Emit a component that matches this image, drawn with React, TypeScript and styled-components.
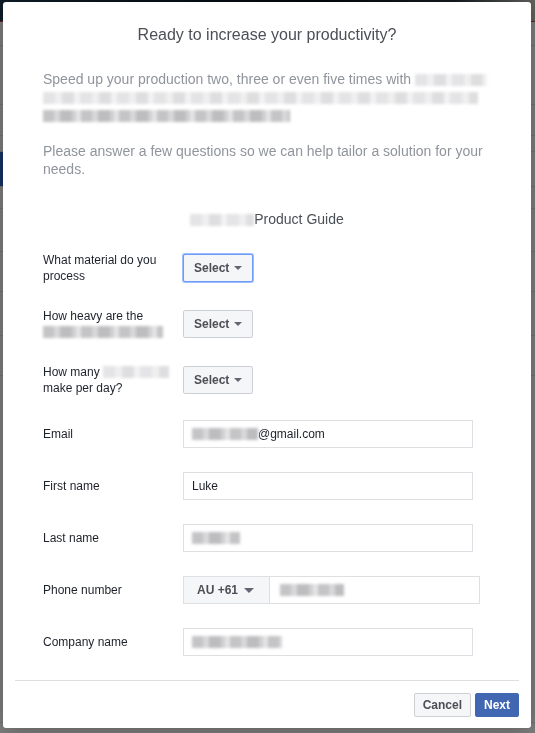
import React from 'react';
import styled, {createGlobalStyle, css} from 'styled-components';

const textDark = '#1d2129';
const textMid = '#4b4f56';
const textLight = '#90949c';
const fbBlue = '#4267b2';
const lineGray = '#dddfe2';

const GlobalStyle = createGlobalStyle`
  html, body {
    margin: 0;
    padding: 0;
    overflow: hidden;
    background: #ffffff;
  }
  body {
    font-family: "Liberation Sans", Arial, Helvetica, sans-serif;
    -webkit-font-smoothing: antialiased;
  }
`;

// ---- page behind the dialog ----

const Page = styled.div`
  width: 535px;
  height: 733px;
  display: flex;
  flex-direction: column;
  background: #ffffff;
  overflow: hidden;
`;

const Cover = styled.div`
  height: 21px;
  flex-shrink: 0;
  background: linear-gradient(90deg, #1d3b52 0%, #0f2436 30%, #08121b 60%, #2a3a44 85%, #c8c8c0 100%);
  border-bottom: 1px solid #e0393e;
`;

const Stripe = styled.div<{$h: number; $tab?: boolean}>`
  height: ${p => p.$h}px;
  flex-shrink: 0;
  border-bottom: 1px solid #e3e5e8;
  box-sizing: border-box;
  ${p => p.$tab && css`
    background: linear-gradient(90deg, #2f63c9 0 6px, transparent 6px);
  `}
`;

const PageFooter = styled.div`
  display: flex;
  padding: 8px 0 0 27px;
  font-size: 16px;
  line-height: 18px;
  color: ${textDark};
`;

const FooterCell = styled.span<{$w: number}>`
  width: ${p => p.$w}px;
`;

const Backdrop = styled.div`
  position: fixed;
  inset: 0;
  background: rgba(0, 0, 0, 0.5);
`;

// ---- dialog ----

const Dialog = styled.div`
  position: fixed;
  top: 2px;
  left: 3px;
  width: 528px;
  background: #ffffff;
  border-radius: 3px;
  box-shadow: 0 2px 26px rgba(0, 0, 0, 0.3);
`;

const Body = styled.div`
  padding: 23px 40px 24px;
`;

const Title = styled.h2`
  margin: 0;
  font-size: 16px;
  line-height: 20px;
  font-weight: normal;
  text-align: center;
  color: ${textMid};
`;

const Intro = styled.p<{$gap: number}>`
  margin: ${p => p.$gap}px 0 0;
  font-size: 14px;
  line-height: 18px;
  color: ${textLight};
`;

const GuideTitle = styled.div`
  margin-top: 32px;
  font-size: 14px;
  line-height: 18px;
  text-align: center;
  color: ${textMid};
`;

// pixelated, blurred block standing in for redacted text
const Redacted = styled.span<{$w: number; $dark?: boolean}>`
  display: inline-block;
  width: ${p => p.$w}px;
  height: 12px;
  vertical-align: -2px;
  filter: blur(1.5px);
  background: ${p => p.$dark
    ? 'repeating-linear-gradient(90deg, #c4c4c6 0 11px, #d8d8da 11px 17px, #bdbdc0 17px 29px, #d0d0d2 29px 33px, #e4e4e5 33px 38px)'
    : 'repeating-linear-gradient(90deg, #e4e4e6 0 12px, #efeff0 12px 19px, #dedee0 19px 31px, #f2f2f3 31px 37px)'};
`;

const Fields = styled.div`
  margin-top: 24px;
  display: flex;
  flex-direction: column;
  gap: 24px;
`;

const Row = styled.div`
  display: flex;
  align-items: center;
`;

const Label = styled.div`
  width: 128px;
  margin-right: 12px;
  font-size: 12px;
  line-height: 16px;
  color: ${textDark};
`;

const SelectButton = styled.button<{$focused?: boolean}>`
  display: inline-flex;
  align-items: center;
  gap: 5px;
  width: 70px;
  height: 28px;
  padding: 0 0 0 10px;
  box-sizing: border-box;
  border: 1px solid #ccd0d5;
  border-radius: 2px;
  background: #f5f6f7;
  color: ${textMid};
  font-family: inherit;
  font-size: 12px;
  font-weight: bold;
  cursor: pointer;
  ${p => p.$focused && css`
    border-color: #6f9cf7;
    box-shadow: 0 0 0 1px rgba(88, 144, 255, 0.6);
  `}
`;

const InputBox = styled.div<{$w: number}>`
  width: ${p => p.$w}px;
  height: 28px;
  box-sizing: border-box;
  display: flex;
  align-items: center;
  padding: 0 8px;
  border: 1px solid ${lineGray};
  background: #ffffff;
  font-size: 12px;
  color: ${textDark};
`;

const PhoneGroup = styled.div`
  display: flex;
`;

const CountryCode = styled.button`
  display: flex;
  align-items: center;
  gap: 6px;
  width: 87px;
  height: 28px;
  box-sizing: border-box;
  padding: 0 0 0 13px;
  border: 1px solid ${lineGray};
  background: #f5f6f7;
  color: ${textMid};
  font-family: inherit;
  font-size: 12px;
  font-weight: bold;
`;

const PhoneInput = styled(InputBox)`
  margin-left: -1px;
  padding-left: 10px;
`;

const Footer = styled.div`
  margin: 0 12px;
  padding: 12px 0 11px;
  border-top: 1px solid ${lineGray};
  display: flex;
  justify-content: flex-end;
  gap: 4px;
`;

const ActionButton = styled.button<{$primary?: boolean}>`
  height: 24px;
  padding: 0 8px;
  box-sizing: border-box;
  border-radius: 2px;
  font-family: inherit;
  font-size: 12px;
  font-weight: bold;
  line-height: 22px;
  cursor: pointer;
  border: 1px solid ${p => (p.$primary ? fbBlue : '#ced0d4')};
  background: ${p => (p.$primary ? fbBlue : '#f5f6f7')};
  color: ${p => (p.$primary ? '#ffffff' : textMid)};
`;

function Caret({size = 8}: {size?: number}) {
  return (
    <svg width={size} height={size / 2} viewBox="0 0 8 4" fill="#606770">
      <path d="M0 0h8L4 4z" />
    </svg>
  );
}

const stripes = [24, 59, 31, 16, 35, 22, 43, 40, 44, 40, 347];

export default function App() {
  return (
    <>
      <GlobalStyle />
      <Page>
        <Cover />
        {stripes.map((h, i) => (
          <Stripe key={i} $h={h} $tab={i === 4} />
        ))}
        <PageFooter>
          <FooterCell $w={310}>Social Presence</FooterCell>
          <FooterCell $w={180}>Platform Status</FooterCell>
        </PageFooter>
      </Page>
      <Backdrop />

      <Dialog>
        <Body>
          <Title>Ready to increase your productivity?</Title>
          <Intro $gap={25}>
            Speed up your production two, three or even five times with{' '}
            <Redacted $w={72} /> <Redacted $w={435} /> <Redacted $w={247} $dark />
          </Intro>
          <Intro $gap={18}>
            Please answer a few questions so we can help tailor a solution for your needs.
          </Intro>
          <GuideTitle>
            <Redacted $w={64} />Product Guide
          </GuideTitle>

          <Fields>
            <Row>
              <Label>What material do you process</Label>
              <SelectButton $focused>Select <Caret /></SelectButton>
            </Row>
            <Row>
              <Label>How heavy are the <Redacted $w={120} $dark /></Label>
              <SelectButton>Select <Caret /></SelectButton>
            </Row>
            <Row>
              <Label>How many <Redacted $w={66} /> make per day?</Label>
              <SelectButton>Select <Caret /></SelectButton>
            </Row>
            <Row>
              <Label>Email</Label>
              <InputBox $w={290}>
                <Redacted $w={66} $dark />@gmail.com
              </InputBox>
            </Row>
            <Row>
              <Label>First name</Label>
              <InputBox $w={290}>Luke</InputBox>
            </Row>
            <Row>
              <Label>Last name</Label>
              <InputBox $w={290}>
                <Redacted $w={48} $dark />
              </InputBox>
            </Row>
            <Row>
              <Label>Phone number</Label>
              <PhoneGroup>
                <CountryCode>AU +61 <Caret size={10} /></CountryCode>
                <PhoneInput $w={211}>
                  <Redacted $w={64} $dark />
                </PhoneInput>
              </PhoneGroup>
            </Row>
            <Row>
              <Label>Company name</Label>
              <InputBox $w={290}>
                <Redacted $w={90} $dark />
              </InputBox>
            </Row>
          </Fields>
        </Body>
        <Footer>
          <ActionButton>Cancel</ActionButton>
          <ActionButton $primary>Next</ActionButton>
        </Footer>
      </Dialog>
    </>
  );
}
